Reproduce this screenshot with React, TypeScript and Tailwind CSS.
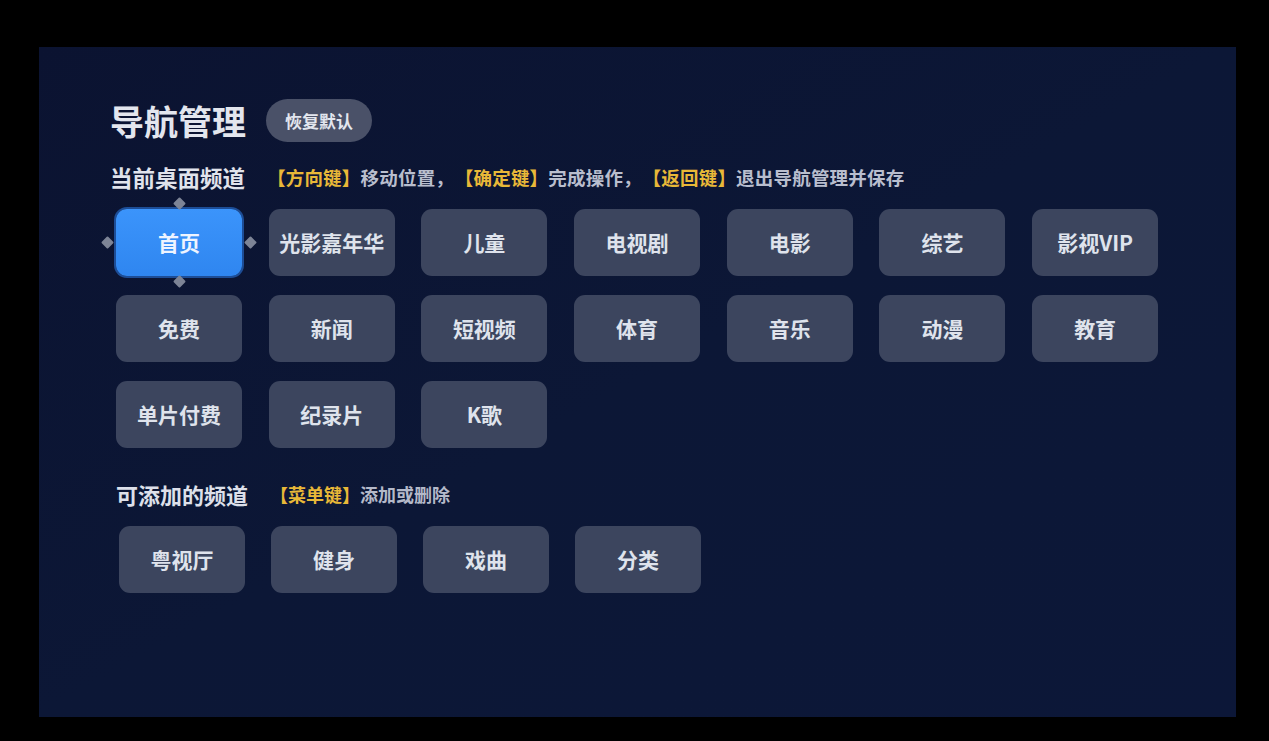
import React from "react";

const row1 = ["首页", "光影嘉年华", "儿童", "电视剧", "电影", "综艺", "影视VIP"];
const row2 = ["免费", "新闻", "短视频", "体育", "音乐", "动漫", "教育"];
const row3 = ["单片付费", "纪录片", "K歌"];
const addable = ["粤视厅", "健身", "戏曲", "分类"];

const font = { fontFamily: '"Noto Sans CJK SC", "Noto Sans", sans-serif' };

function Arrow({ cls }: { cls: string }) {
  return <div className={`absolute w-[9px] h-[9px] rotate-45 rounded-[1px] bg-[#7d8496] ${cls}`} />;
}

function Tile({ label, focused }: { label: string; focused?: boolean }) {
  if (focused) {
    return (
      <div className="relative w-[126px] h-[67px]">
        <Arrow cls="left-1/2 -ml-[4.5px] -top-[10px]" />
        <Arrow cls="left-1/2 -ml-[4.5px] -bottom-[10px]" />
        <Arrow cls="top-1/2 -mt-[4.5px] -left-[13px]" />
        <Arrow cls="top-1/2 -mt-[4.5px] -right-[13px]" />
        <div className="w-full h-full rounded-[11px] bg-gradient-to-b from-[#3b94fb] to-[#2f86f0] ring-2 ring-[#1d4d96] flex items-center justify-center text-[21px] font-semibold text-[#eef4ff]">
          {label}
        </div>
      </div>
    );
  }
  return (
    <div className="w-[126px] h-[67px] rounded-[11px] bg-[#3c455e] flex items-center justify-center text-[21px] font-semibold text-[#dfe3ec]">
      {label}
    </div>
  );
}

export default function App() {
  return (
    <div className="w-[1269px] h-[741px] bg-black overflow-hidden pt-[47px] pl-[39px]" style={font}>
      <div className="w-[1197px] h-[670px] bg-gradient-to-br from-[#0b1331] via-[#0c1736] to-[#0c1738] pl-[71px] pt-[52px]">
        <div className="flex items-center gap-[20px]">
          <div className="text-[34px] font-bold text-[#e3e6ee] leading-none">导航管理</div>
          <div className="h-[43px] px-[19px] rounded-full bg-[#4a5168] flex items-center text-[17px] font-semibold text-[#e3e6ee]">
            恢复默认
          </div>
        </div>
        <div className="mt-[21px] flex items-center h-[30px]">
          <div className="text-[22.5px] font-bold text-[#e0e3ec]">当前桌面频道</div>
          <div className="ml-[22px] text-[18.5px] font-semibold text-[#b9bece] tracking-[0.2px]">
            <span className="text-[#e8b838]">【方向键】</span>移动位置，
            <span className="ml-[10px] text-[#e8b838]">【确定键】</span>完成操作，
            <span className="ml-[10px] text-[#e8b838]">【返回键】</span>退出导航管理并保存
          </div>
        </div>
        <div className="mt-[16px] ml-[6px] grid grid-cols-[repeat(7,126px)] gap-x-[26.7px] gap-y-[19px]">
          {row1.map((l, i) => (
            <Tile key={l} label={l} focused={i === 0} />
          ))}
          {row2.map((l) => (
            <Tile key={l} label={l} />
          ))}
          {row3.map((l) => (
            <Tile key={l} label={l} />
          ))}
        </div>
        <div className="mt-[32px] ml-[6px] flex items-center h-[28px]">
          <div className="text-[22px] font-bold text-[#dde0ea]">可添加的频道</div>
          <div className="ml-[22px] text-[18px] font-semibold text-[#b4b9c9]">
            <span className="text-[#e8b838]">【菜单键】</span>添加或删除
          </div>
        </div>
        <div className="mt-[18px] ml-[9px] flex gap-[26px]">
          {addable.map((l) => (
            <Tile key={l} label={l} />
          ))}
        </div>
      </div>
    </div>
  );
}
